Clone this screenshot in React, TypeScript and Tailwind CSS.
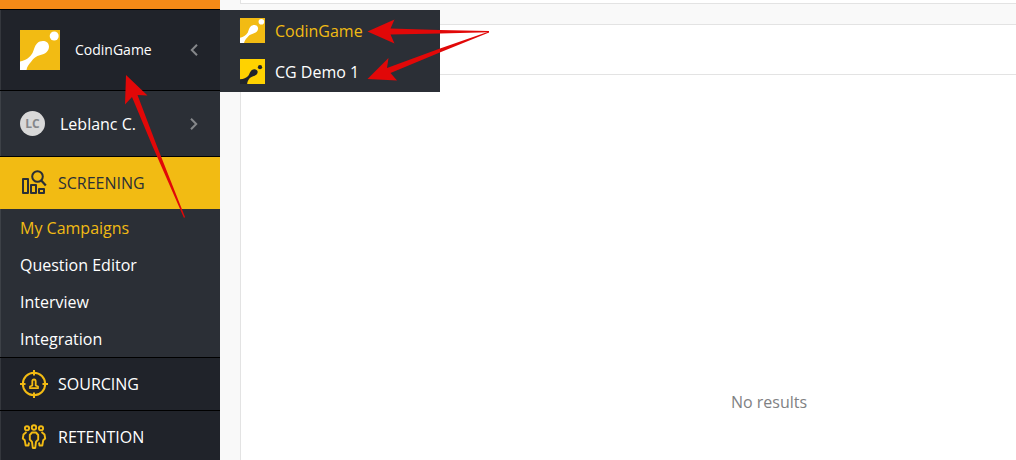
import * as React from "react";
import { clsx } from "clsx";

interface LogoProps {
  className?: string;
  background?: string;
  color?: string;
  small?: boolean;
}

const Logo = ({
  className,
  background = "#f2bb13",
  color = "#ffffff",
  small = false,
}: LogoProps) => (
  <svg viewBox="0 0 40 40" className={className} aria-hidden="true">
    <rect width="40" height="40" fill={background} />
    {small ? (
      <g fill={color}>
        <circle cx="32" cy="13" r="3.400" />
        <path d="M0 32.500C6 32 10 30 13 27C15.500 24 16 20 18.500 18C22 15 28 16 28.300 20.500C28.300 24.500 25 26.500 21 27.500C17 28.500 15 31 13.500 33.500C12 36 11.500 38 11.500 40H0Z" />
      </g>
    ) : (
      <g fill={color}>
        <circle cx="34.200" cy="6" r="4.500" />
        <path d="M0 31.500C6 30.500 10 27 12.500 23C14 19.500 14.500 16 17 13.500C21 9.500 28.700 10.500 29 16.500C29 21.500 25 24 20.500 25C16 26 13.500 28.500 11.300 31.500C8.500 34.500 7 37 6.500 40H0Z" />
      </g>
    )}
  </svg>
);

const Chevron = ({ direction }: { direction: "left" | "right" }) => (
  <svg
    viewBox="0 0 8 12"
    className="h-3 w-2"
    fill="none"
    stroke="#85878a"
    strokeWidth="2"
    aria-hidden="true"
  >
    <path d={direction === "left" ? "M7 .8 1.800 6 7 11.200" : "M1 .8 6.200 6 1 11.200"} />
  </svg>
);

const ScreeningIcon = () => (
  <svg
    viewBox="0 0 28 28"
    className="size-7"
    fill="none"
    stroke="currentColor"
    strokeWidth="2"
    aria-hidden="true"
  >
    <path d="M3 10h5v14H3zM11 16h5v8h-5zM19 20h5v4h-5z" strokeLinejoin="round" />
    <circle cx="17.500" cy="7.500" r="5.300" />
    <path d="m21.300 11.500 4.500 5" strokeWidth="2.200" />
  </svg>
);

const SourcingIcon = () => (
  <svg
    viewBox="0 0 28 28"
    className="size-7"
    fill="none"
    stroke="#f2bb13"
    strokeWidth="2"
    aria-hidden="true"
  >
    <circle cx="14" cy="14" r="11.200" />
    <path d="M14 0v5.500M14 22.500V28M0 14h5.500M22.500 14H28" />
    <path
      d="M12.300 15.500V11.500C12.300 8.800 15.700 8.800 15.700 11.500V15.500L18 16.500V18.200H10V16.500Z"
      strokeWidth="1.800"
      strokeLinejoin="round"
    />
  </svg>
);

const RetentionIcon = () => (
  <svg
    viewBox="0 0 28 28"
    className="size-7"
    fill="none"
    stroke="#f2bb13"
    strokeWidth="1.900"
    strokeLinejoin="round"
    aria-hidden="true"
  >
    <circle cx="14" cy="4.500" r="2.200" />
    <circle cx="7" cy="5.300" r="2.100" />
    <circle cx="21" cy="5.300" r="2.100" />
    <path d="M12 9.500 9.800 12v4.500l2.200 2.300.8 6.200h2.400l.8-6.200 2.200-2.300V12L16 9.500Z" />
    <path d="M6.500 9 3.500 11.500 2.800 15.500l2 1.800.9 5.200h2.800l.5-3M21.500 9l3 2.500.7 4-2 1.800-.9 5.200h-2.800l-.5-3" />
  </svg>
);

const campaignLinks = [
  "My Campaigns",
  "Question Editor",
  "Interview",
  "Integration",
];

const Sidebar = () => (
  <aside className="w-[220px] shrink-0 bg-[#2b2f36] text-white">
    <div className="h-[9px] bg-[#f58a17]" />
    <button
      type="button"
      className="flex h-[82px] w-full items-center border-y border-black bg-[#20232a] pl-5 pr-[22px] text-sm shadow-[inset_1px_0_#34373d]"
    >
      <Logo className="mr-[15px] size-10" />
      <span>CodinGame</span>
      <span className="ml-auto">
        <Chevron direction="left" />
      </span>
    </button>
    <button
      type="button"
      className="flex h-[66px] w-full items-center border-b border-black pl-5 pr-[22px] shadow-[inset_1px_0_#3d4147]"
    >
      <span className="mr-[15px] flex size-[25px] items-center justify-center rounded-full bg-[#d8d8d8] text-xs font-bold text-[#85878a]">
        LC
      </span>
      <span>Leblanc C.</span>
      <span className="ml-auto">
        <Chevron direction="right" />
      </span>
    </button>
    <nav>
      <a
        href="#screening"
        className="flex h-[52px] items-center gap-[10px] bg-[#f2bb13] px-5 text-[#2b2f36]"
      >
        <ScreeningIcon />
        SCREENING
      </a>
      <ul className="shadow-[inset_1px_0_#3d4147]">
        {campaignLinks.map((label, index) => (
          <li key={label}>
            <a
              href="#campaigns"
              className={clsx(
                "flex h-[37px] items-center px-5",
                index === 0 && "text-[#f2bb13]",
              )}
            >
              {label}
            </a>
          </li>
        ))}
      </ul>
      <a
        href="#sourcing"
        className="flex h-[53px] items-center gap-[10px] border-t border-black bg-[#20232a] px-5 shadow-[inset_1px_0_#34373d]"
      >
        <SourcingIcon />
        SOURCING
      </a>
      <a
        href="#retention"
        className="flex h-[53px] items-center gap-[10px] border-t border-black bg-[#20232a] px-5 shadow-[inset_1px_0_#34373d]"
      >
        <RetentionIcon />
        RETENTION
      </a>
    </nav>
  </aside>
);

const CompanyMenu = () => (
  <div className="absolute left-[220px] top-[10px] w-[220px] bg-[#2b2f36] text-white">
    <button
      type="button"
      className="flex h-[41px] w-full items-center gap-[10px] px-5 text-[#f2bb13]"
    >
      <Logo className="size-[25px]" />
      CodinGame
    </button>
    <button
      type="button"
      className="flex h-[41px] w-full items-center gap-[10px] px-5"
    >
      <Logo
        className="size-[25px]"
        background="#ffd200"
        color="#20232a"
        small
      />
      CG Demo 1
    </button>
  </div>
);

// Red callouts drawn over the page
const Arrows = () => (
  <svg
    width="500"
    height="230"
    viewBox="0 0 500 230"
    fill="#e10808"
    className="pointer-events-none absolute left-0 top-0"
    aria-hidden="true"
  >
    <path d="M126 75 147.500 95.500 137.500 95 156.500 145 185 217 184 218 152 145 132 97 125 104.500Z" />
    <path d="M367.500 31.500 394.500 19.500 390.500 28.500 440 30 489 31V32.200L440 33.500 390.500 34.500 394.500 43.500Z" />
    <path d="M367.500 79 388.500 58 387 68 440 48.500 489 31.500V32.500L441 52 390.500 73 397 80.500Z" />
  </svg>
);

export default function App() {
  return (
    <div className="relative flex h-screen overflow-hidden bg-[#f9f9f9] font-['Open_Sans',sans-serif] text-base">
      <Sidebar />
      <main className="flex min-w-0 flex-1 flex-col overflow-hidden pl-5">
        <div className="h-1 w-full shrink-0 border-b border-l border-[#e3e3e3] bg-white" />
        <section className="mt-5 flex min-w-[1057px] flex-1 flex-col border-l border-t border-[#e3e3e3] bg-white">
          <div className="h-[50px] border-b border-[#e3e3e3]" />
          <p className="pt-[315px] text-center text-[#7f8183]">No results</p>
        </section>
      </main>
      <CompanyMenu />
      <Arrows />
    </div>
  );
}
